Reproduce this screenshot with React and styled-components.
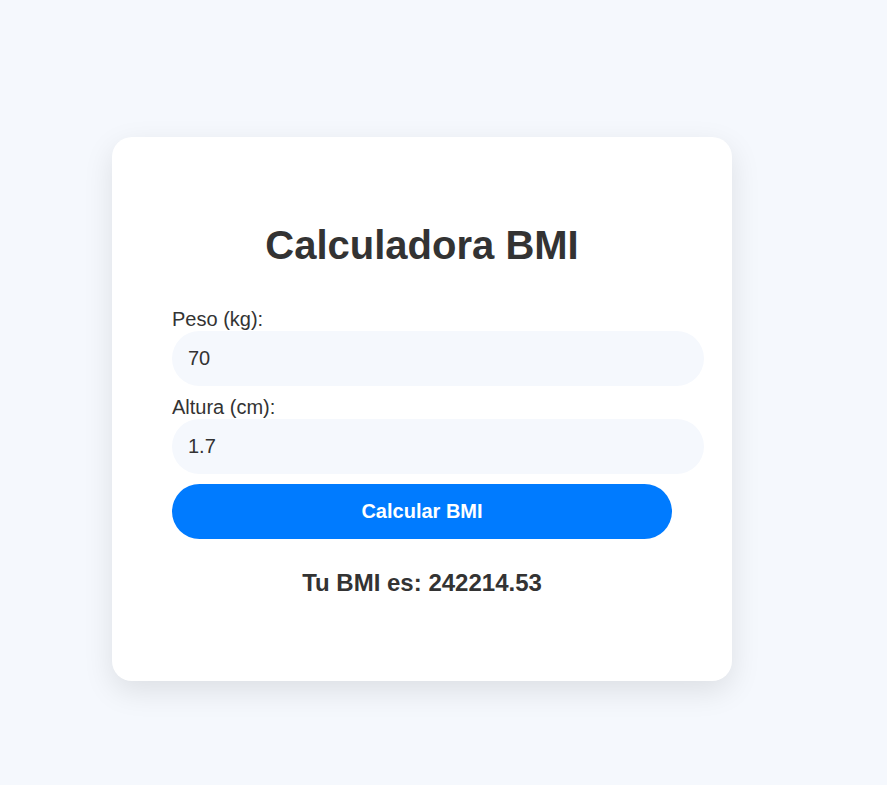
import React, { useState } from "react";
import styled, { createGlobalStyle } from "styled-components";

const GlobalStyle = createGlobalStyle`
  html, body {
    margin: 0;
    padding: 0;
    background: #f5f8fd;
    font-family: "Liberation Sans", Arial, sans-serif;
    color: #333;
  }
`;

const Page = styled.div`
  min-height: 785px;
  box-sizing: border-box;
  padding: 137px 0 0 112px;
`;

const Card = styled.div`
  width: 500px;
  padding: 60px;
  background: #ffffff;
  border-radius: 20px;
  box-shadow: 0 10px 30px rgba(0, 0, 0, 0.1);
  display: flex;
  flex-direction: column;
`;

const Title = styled.h1`
  margin: 25px 0 40px;
  font-size: 40px;
  line-height: 46px;
  font-weight: 700;
  text-align: center;
  color: #333;
`;

const Label = styled.label`
  display: block;
  font-size: 20px;
  line-height: 23px;
  color: #333;
`;

const Input = styled.input`
  display: block;
  width: 100%;
  padding: 16px;
  margin: 0 0 10px;
  border: none;
  outline: none;
  border-radius: 28px;
  background: #f5f8fd;
  font-family: "Liberation Sans", Arial, sans-serif;
  font-size: 20px;
  line-height: 23px;
  height: 55px;
  box-sizing: content-box;
  height: 23px;
  color: #333;
`;

const Button = styled.button`
  width: 500px;
  height: 55px;
  padding: 0;
  border: none;
  border-radius: 28px;
  background: #007bff;
  color: #ffffff;
  font-family: "Liberation Sans", Arial, sans-serif;
  font-size: 20px;
  font-weight: 700;
  cursor: pointer;
`;

const Result = styled.h3`
  margin: 30px 0 24px;
  font-size: 24px;
  line-height: 28px;
  font-weight: 700;
  text-align: center;
  color: #333;
`;

export default function App() {
  const [peso, setPeso] = useState("70");
  const [altura, setAltura] = useState("1.7");
  const [bmi, setBmi] = useState("242214.53");

  const calc = () => {
    const h = parseFloat(altura) / 100;
    const w = parseFloat(peso);
    if (h > 0 && w > 0) setBmi((w / (h * h)).toFixed(2));
  };

  return (
    <>
      <GlobalStyle />
      <Page>
        <Card>
          <Title>Calculadora BMI</Title>
          <Label htmlFor="peso">Peso (kg):</Label>
          <Input id="peso" value={peso} onChange={(e) => setPeso(e.target.value)} />
          <Label htmlFor="altura">Altura (cm):</Label>
          <Input id="altura" value={altura} onChange={(e) => setAltura(e.target.value)} />
          <Button onClick={calc}>Calcular BMI</Button>
          <Result>Tu BMI es: {bmi}</Result>
        </Card>
      </Page>
    </>
  );
}
